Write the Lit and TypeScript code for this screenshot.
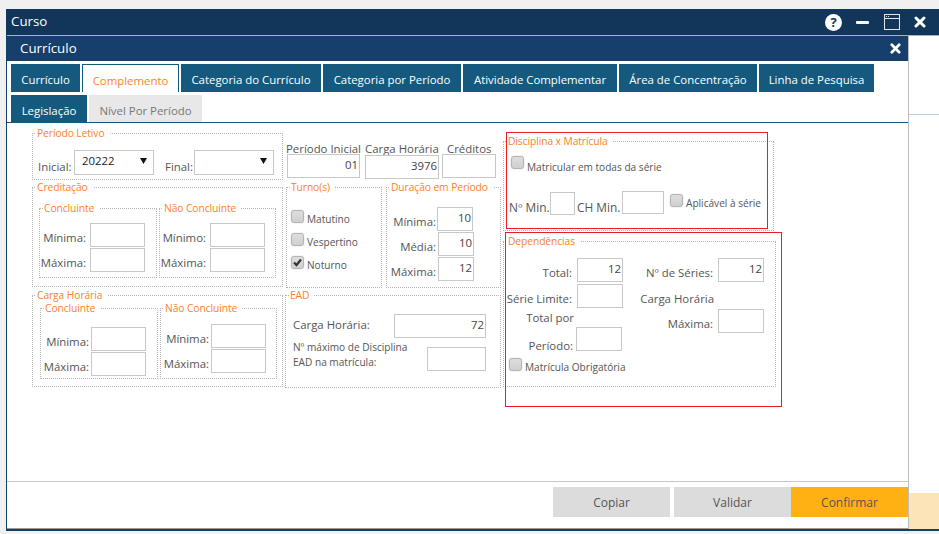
import { LitElement, html, css } from 'lit';
import { customElement } from 'lit/decorators.js';

const FIRST_TABS = [
  { label: 'Currículo', width: 69 },
  { label: 'Complemento', width: 97, active: true },
  { label: 'Categoria do Currículo', width: 140 },
  { label: 'Categoria por Período', width: 138 },
  { label: 'Atividade Complementar', width: 154 },
  { label: 'Área de Concentração', width: 138 },
  { label: 'Linha de Pesquisa', width: 115 },
];

const X_ICON = (size: number) => html`
  <svg width=${size} height=${size} viewBox="0 0 12 12">
    <path d="M2 2 L10 10 M10 2 L2 10" stroke="#fff" stroke-width="3" stroke-linecap="round" fill="none"></path>
  </svg>
`;

@customElement('app-root')
export class AppRoot extends LitElement {
  static styles = css`
    :host {
      display: block;
      width: 939px;
      height: 534px;
      box-sizing: border-box;
      padding: 9px 0 3px 6px;
      background: #f0f0f0;
      font-family: 'Open Sans', 'Noto Sans', 'Liberation Sans', sans-serif;
      font-size: 11.4px;
      color: #555;
      overflow: hidden;
    }
    .window {
      height: 522px;
      box-sizing: border-box;
      display: flex;
      flex-direction: column;
      border-left: 1px solid #12406b;
      border-bottom: 2px solid #15405f;
    }
    .titlebar {
      height: 26px;
      flex: none;
      margin-left: -1px;
      background: #12355a;
      color: #fff;
      font-size: 13.3px;
      display: flex;
      align-items: center;
      justify-content: space-between;
      padding: 0 13px 0 5px;
    }
    .titlebar .name { margin-bottom: 2px; }
    .controls { display: flex; align-items: center; }
    .help {
      width: 17px;
      height: 17px;
      border-radius: 50%;
      background: #fff;
      color: #12355a;
      font-size: 13px;
      font-weight: 700;
      line-height: 17px;
      text-align: center;
      margin-right: 14px;
    }
    .minimize {
      width: 13px;
      height: 3px;
      border-radius: 1px;
      background: #fff;
      margin-right: 15px;
    }
    .controls svg.max { margin-right: 14px; display: block; }
    .body {
      flex: 1;
      min-height: 0;
      display: flex;
      border-top: 1px solid #a9b4bc;
    }
    .inner {
      width: 902px;
      flex: none;
      box-sizing: border-box;
      display: flex;
      flex-direction: column;
      border-right: 1px solid #bdbdbd;
      border-bottom: 1px solid #9a9a9a;
      background: #fff;
    }
    .side {
      flex: 1;
      display: flex;
      flex-direction: column;
      justify-content: space-between;
      background: #fff;
    }
    .side-top { height: 78px; border-bottom: 1px solid #b9d2de; }
    .side-bottom { height: 36px; background: #fde3b8; }
    .header {
      height: 25px;
      flex: none;
      background: #163f6c;
      color: #fff;
      font-size: 13.3px;
      display: flex;
      align-items: center;
      justify-content: space-between;
      padding: 0 7px 0 13px;
    }
    .header span { margin-bottom: 2px; }
    .tabs {
      flex: none;
      padding: 3px 0 0 4px;
      border-bottom: 1px solid #0f5a7c;
    }
    .tab-row { display: flex; gap: 2px; height: 28px; }
    .tab-row + .tab-row { margin-top: 3px; height: 27px; }
    .tab {
      box-sizing: border-box;
      padding-top: 3px;
      background: #155a7e;
      color: #fff;
      display: flex;
      align-items: center;
      justify-content: center;
      white-space: nowrap;
    }
    .tab.active {
      background: #fff;
      color: #ff7f27;
      border: 1px solid #0f5a7c;
      border-bottom: 0;
    }
    .tab.off { background: #e8e8e8; color: #777; }
    .legis { width: 76px; }
    .nivel { width: 113px; }

    .form {
      flex: 1;
      position: relative;
      display: flex;
      gap: 2px;
      padding: 3px 0 0 25px;
    }
    .col { display: flex; flex-direction: column; }
    .col1 { width: 251px; }
    .col2 { width: 216px; }
    .col3 { width: 273px; padding-top: 8px; }

    fieldset {
      box-sizing: border-box;
      margin: 0;
      padding: 0;
      min-width: 0;
      border: 1px dotted #b5b5b5;
    }
    legend {
      margin-left: 3px;
      padding: 0 5px 0 1px;
      color: #ff7f27;
      font-size: 10.3px;
      letter-spacing: -0.1px;
      line-height: 14px;
      white-space: nowrap;
    }
    .row {
      display: flex;
      align-items: flex-end;
      justify-content: flex-end;
      gap: 3px;
    }
    .row label { padding-bottom: 1px; }
    label, .text { white-space: nowrap; line-height: 16px; }
    input {
      box-sizing: border-box;
      display: block;
      flex: none;
      height: 24px;
      margin: 0;
      padding: 0 1px 3px 0;
      border: 1px solid #c8c8c8;
      border-radius: 0;
      outline: 0;
      background: #fff;
      color: #444;
      font: inherit;
      text-align: right;
    }
    .w55 { width: 55px; }
    .w45 { width: 46px; }
    .w36 { width: 36px; }

    .letivo { height: 54px; }
    .letivo-body {
      display: flex;
      align-items: flex-end;
      padding: 10px 0 0 5px;
    }
    .letivo-body label { width: 33px; margin-right: 3px; }
    .letivo-body label.final { width: 26px; margin-left: 11px; }
    .select {
      box-sizing: border-box;
      width: 80px;
      height: 25px;
      border: 1px solid #c8c8c8;
      display: flex;
      align-items: center;
      justify-content: space-between;
      padding: 0 6px 4px 7px;
      color: #222;
    }
    .select svg { display: block; margin-left: auto; }

    .creditacao { height: 107px; }
    .creditacao .row { gap: 4px; }
    .pair { display: flex; gap: 2px; padding: 7px 0 0 6px; }
    .sub { width: 118px; height: 77px; }
    .sub.narrow { width: 117px; }
    .rows { display: flex; flex-direction: column; gap: 1px; padding: 8px 11px 0 0; }
    .narrow .rows { padding-right: 10px; }

    .carga { height: 99px; margin-top: 1px; }
    .carga .row { gap: 2px; }
    .carga .pair { padding: 0 0 0 7px; margin-top: -1px; }
    .carga .sub { height: 78px; }
    .carga .rows { padding-top: 12px; }
    .carga .rows.high { padding-top: 9px; }

    .totals { height: 54px; display: flex; padding-left: 1px; }
    .total { display: flex; flex-direction: column; align-items: flex-start; }
    .total .text { margin-top: 15px; height: 13px; line-height: 16px; }
    .total.ini { width: 79px; }
    .total.ch { width: 77px; }
    .total.cr { width: 54px; }
    .ini input { width: 73px; margin-left: 1px; }
    .ch input { width: 74px; margin-top: 1px; }
    .cr input { width: 54px; }
    .cr .text { margin-left: 5px; }

    .middle { display: flex; gap: 4px; padding-left: 1px; height: 108px; }
    .turno { width: 96px; }
    .duracao { width: 115px; }
    .checks { display: flex; flex-direction: column; gap: 6px; padding: 16px 0 0 4px; }
    .check { display: flex; align-items: flex-start; gap: 3px; white-space: nowrap; font-size: 10.1px; }
    .check span { margin-top: 1px; line-height: 16px; }
    .check.low span { margin-top: 3px; }
    .box {
      box-sizing: border-box;
      flex: none;
      width: 13px;
      height: 13px;
      border: 1px solid #b4b4b4;
      border-radius: 3px;
      background: linear-gradient(#dedede, #cfcfcf);
      box-shadow: 0 0 1px #999;
    }
    .box svg { display: block; }
    .duracao .rows { padding: 13px 26px 0 0; gap: 1px; }
    .duracao .row { gap: 2px; }
    .duracao .row.nudge { margin-right: 1px; gap: 1px; }

    .ead { height: 100px; }
    .ead-body { padding: 12px 14px 0 7px; display: flex; flex-direction: column; gap: 9px; }
    .ead-row { display: flex; justify-content: space-between; }
    .ead-row label { padding-top: 3px; }
    .w92 { width: 92px; }
    .w59 { width: 59px; }
    .ead-row label.two-lines {
      padding-top: 0;
      margin-top: -7px;
      font-size: 10.1px;
      line-height: 15px;
    }

    .disciplina { height: 97px; width: 271px; }
    .disc-top { padding: 8px 0 0 7px; }
    .disc-row { display: flex; align-items: flex-start; padding: 16px 0 0 5px; font-size: 11.9px; }
    .disc-row label { margin-top: 8px; }
    .disc-row input { height: 23px; }
    .disc-row .min-label { width: 40px; }
    .disc-row .ch-label { width: 43px; }
    .disc-min { width: 25px; margin: 1px 2px 0 1px; }
    .disc-ch { width: 42px; margin: 0 6px 0 2px; }
    .disc-row .check { margin-top: 3px; }
    .dependencias { height: 153px; margin-top: 3px; }
    .dep-body { display: flex; padding-top: 10px; }
    .dep-left { width: 119px; display: flex; flex-direction: column; gap: 2px; }
    .dep-right { width: 141px; display: flex; flex-direction: column; }
    .dep-left .row, .dep-right .row { gap: 5px; }
    .dep-period { display: flex; flex-direction: column; align-items: flex-end; }
    .dep-period .total-por { margin-right: 49px; }
    .dep-period .row { gap: 3px; margin: 1px 1px 0 0; }
    .dep-period label { padding-bottom: 0; margin-bottom: -3px; }
    .dep-right .caption { text-align: right; margin: 9px 50px 0 0; }
    .dep-right .row.last { margin-top: 2px; }
    .dep-check { padding: 5px 0 0 5px; }

    .mark { position: absolute; border: 1px solid #ed1c24; box-sizing: border-box; pointer-events: none; }
    .mark.one { left: 499px; top: 9px; width: 262px; height: 97px; }
    .mark.two { left: 498px; top: 109px; width: 277px; height: 175px; }

    .footer {
      flex: none;
      height: 47px;
      box-sizing: border-box;
      border-top: 1px solid #c8c8c8;
      padding-top: 5px;
      display: flex;
      justify-content: flex-end;
    }
    .btn {
      width: 117px;
      height: 30px;
      background: #dcdcdc;
      color: #555;
      font-size: 12px;
      display: flex;
      align-items: center;
      justify-content: center;
    }
    .btn + .btn { margin-left: 4px; }
    .btn.go { margin-left: 0; background: #ffb114; color: #555; }
  `;

  private checkbox(label: string, checked = false, cls = '') {
    return html`<div class="check ${cls}">
      <div class="box">
        ${checked
          ? html`<svg width="11" height="11" viewBox="0 0 11 11"><path d="M2 5.5 L4.5 8 L9 2.5" stroke="#333" stroke-width="2.2" fill="none"></path></svg>`
          : ''}
      </div>
      <span>${label}</span>
    </div>`;
  }

  private field(label: string, value = '', cls = 'w55') {
    return html`<div class="row">
      <label>${label}</label>
      <input class=${cls} .value=${value} readonly />
    </div>`;
  }

  private select(value: string) {
    return html`<div class="select">
      <span>${value}</span>
      <svg width="7" height="6" viewBox="0 0 7 6"><path d="M0 0 H7 L3.5 6 Z" fill="#111"></path></svg>
    </div>`;
  }

  render() {
    return html`
      <div class="window">
        <div class="titlebar">
          <span class="name">Curso</span>
          <div class="controls">
            <div class="help">?</div>
            <div class="minimize"></div>
            <svg class="max" width="16" height="16" viewBox="0 0 16 16">
              <rect x="0.5" y="0.5" width="15" height="15" fill="none" stroke="#dfe6ec"></rect>
              <path d="M1 4.5 H15" stroke="#dfe6ec"></path>
              <path d="M2 2.5 H6" stroke="#dfe6ec" stroke-dasharray="1 1"></path>
            </svg>
            ${X_ICON(12)}
          </div>
        </div>
        <div class="body">
          <div class="inner">
            <div class="header"><span>Currículo</span>${X_ICON(11)}</div>
            <div class="tabs">
              <div class="tab-row">
                ${FIRST_TABS.map(
                  t => html`<div class="tab ${t.active ? 'active' : ''}" style="width:${t.width}px">${t.label}</div>`
                )}
              </div>
              <div class="tab-row">
                <div class="tab legis">Legislação</div>
                <div class="tab off nivel">Nível Por Período</div>
              </div>
            </div>

            <div class="form">
              <div class="col col1">
                <fieldset class="letivo">
                  <legend>Período Letivo</legend>
                  <div class="letivo-body">
                    <label>Inicial:</label>${this.select('20222')}
                    <label class="final">Final:</label>${this.select('')}
                  </div>
                </fieldset>
                <fieldset class="creditacao">
                  <legend>Creditação</legend>
                  <div class="pair">
                    <fieldset class="sub">
                      <legend>Concluinte</legend>
                      <div class="rows">${this.field('Mínima:')}${this.field('Máxima:')}</div>
                    </fieldset>
                    <fieldset class="sub narrow">
                      <legend>Não Concluinte</legend>
                      <div class="rows">${this.field('Mínimo:')}${this.field('Máxima:')}</div>
                    </fieldset>
                  </div>
                </fieldset>
                <fieldset class="carga">
                  <legend>Carga Horária</legend>
                  <div class="pair">
                    <fieldset class="sub">
                      <legend>Concluinte</legend>
                      <div class="rows">${this.field('Mínima:')}${this.field('Máxima:')}</div>
                    </fieldset>
                    <fieldset class="sub narrow">
                      <legend>Não Concluinte</legend>
                      <div class="rows high">${this.field('Mínima:')}${this.field('Máxima:')}</div>
                    </fieldset>
                  </div>
                </fieldset>
              </div>

              <div class="col col2">
                <div class="totals">
                  <div class="total ini"><span class="text">Período Inicial</span><input .value=${'01'} readonly /></div>
                  <div class="total ch"><span class="text">Carga Horária</span><input .value=${'3976'} readonly /></div>
                  <div class="total cr"><span class="text">Créditos</span><input readonly /></div>
                </div>
                <div class="middle">
                  <fieldset class="turno">
                    <legend>Turno(s)</legend>
                    <div class="checks">
                      ${this.checkbox('Matutino')}${this.checkbox('Vespertino')}${this.checkbox('Noturno', true)}
                    </div>
                  </fieldset>
                  <fieldset class="duracao">
                    <legend>Duração em Período</legend>
                    <div class="rows">
                      <div class="row nudge"><label>Mínima:</label><input class="w36" .value=${'10'} readonly /></div>
                      ${this.field('Média:', '10', 'w36')}${this.field('Máxima:', '12', 'w36')}
                    </div>
                  </fieldset>
                </div>
                <fieldset class="ead">
                  <legend>EAD</legend>
                  <div class="ead-body">
                    <div class="ead-row">
                      <label>Carga Horária:</label>
                      <input class="w92" .value=${'72'} readonly />
                    </div>
                    <div class="ead-row">
                      <label class="two-lines">Nº máximo de Disciplina<br />EAD na matrícula:</label>
                      <input class="w59" readonly />
                    </div>
                  </div>
                </fieldset>
              </div>

              <div class="col col3">
                <fieldset class="disciplina">
                  <legend>Disciplina x Matrícula</legend>
                  <div class="disc-top">${this.checkbox('Matricular em todas da série', false, 'low')}</div>
                  <div class="disc-row">
                    <label class="min-label">Nº Min.</label><input class="disc-min" readonly />
                    <label class="ch-label">CH Min.</label><input class="disc-ch" readonly />
                    ${this.checkbox('Aplicável à série')}
                  </div>
                </fieldset>
                <fieldset class="dependencias">
                  <legend>Dependências</legend>
                  <div class="dep-body">
                    <div class="dep-left">
                      ${this.field('Total:', '12', 'w45')}
                      ${this.field('Série Limite:', '', 'w45')}
                      <div class="dep-period">
                        <span class="text total-por">Total por</span>
                        <div class="row"><label>Período:</label><input class="w45" readonly /></div>
                      </div>
                      <div class="dep-check">${this.checkbox('Matrícula Obrigatória')}</div>
                    </div>
                    <div class="dep-right">
                      ${this.field('Nº de Séries:', '12', 'w45')}
                      <span class="text caption">Carga Horária</span>
                      <div class="row last"><label>Máxima:</label><input class="w45" readonly /></div>
                    </div>
                  </div>
                </fieldset>
              </div>

              <div class="mark one"></div>
              <div class="mark two"></div>
            </div>

            <div class="footer">
              <div class="btn">Copiar</div>
              <div class="btn">Validar</div>
              <div class="btn go">Confirmar</div>
            </div>
          </div>
          <div class="side">
            <div class="side-top"></div>
            <div class="side-bottom"></div>
          </div>
        </div>
      </div>
    `;
  }
}
